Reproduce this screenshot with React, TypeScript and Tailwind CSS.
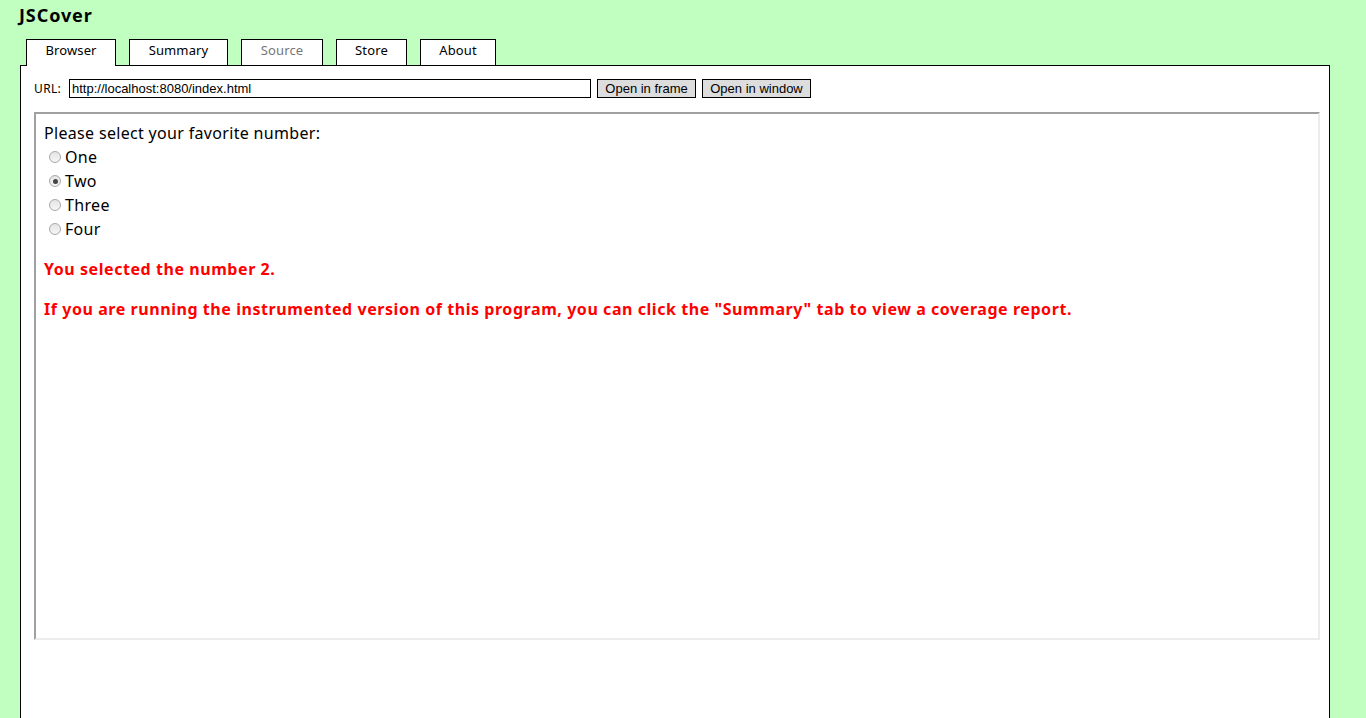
import React from "react";

const tabs = [
  { label: "Browser", w: "w-[90px]", active: true },
  { label: "Summary", w: "w-[99px]" },
  { label: "Source", w: "w-[82px]", disabled: true },
  { label: "Store", w: "w-[71px]" },
  { label: "About", w: "w-[76px]" },
];

const options = ["One", "Two", "Three", "Four"];

function Radio({ checked }: { checked?: boolean }) {
  return (
    <span className="inline-flex items-center justify-center w-[12px] h-[12px] rounded-full border border-[#a8a8a8] bg-gradient-to-b from-[#e4e4e4] to-[#f6f6f6] mr-[4px] ml-[5px]">
      {checked && <span className="w-[5px] h-[5px] rounded-full bg-[#444]" />}
    </span>
  );
}

export default function App() {
  return (
    <div className="h-[718px] overflow-hidden bg-[#c0ffc0] text-black font-['Noto_Sans',sans-serif]">
      <h1 className="pl-[19px] pt-[4px] h-[39px] text-[18px] leading-[22px] font-bold tracking-[0.05em]">JSCover</h1>

      <div className="flex gap-[13px] pl-[26px] relative z-10">
        {tabs.map((t) => (
          <div
            key={t.label}
            className={`${t.w} bg-white border border-black border-b-0 flex justify-center pt-[1px] text-[13px] leading-[18px] tracking-[0.01em] ${
              t.disabled ? "text-[#777]" : "text-black"
            } ${t.active ? "h-[27px] -mb-px" : "h-[26px]"}`}
          >
            {t.label}
          </div>
        ))}
      </div>

      <div className="ml-[20px] w-[1310px] h-[700px] bg-white border border-black">
        <div className="flex items-center pl-[13px] pt-[13px]">
          <span className="w-[35px] text-[12px] tracking-[0.03em]">URL:</span>
          <div className="w-[522px] h-[19px] border border-black flex items-center px-[2px] text-[13px] font-['Liberation_Sans',sans-serif]">
            http://localhost:8080/index.html
          </div>
          <button className="ml-[6px] w-[99px] h-[19px] border border-black bg-[#dddddd] text-[13px] leading-none font-['Liberation_Sans',sans-serif]">
            Open in frame
          </button>
          <button className="ml-[6px] w-[109px] h-[19px] border border-black bg-[#dddddd] text-[13px] leading-none font-['Liberation_Sans',sans-serif]">
            Open in window
          </button>
        </div>

        <div className="ml-[13px] mt-[14px] w-[1286px] h-[528px] border-2 border-t-[#a0a0a0] border-l-[#a0a0a0] border-b-[#ececec] border-r-[#ececec] px-[8px] pt-[7px] text-[16px] leading-[24px] tracking-[0.02em]">
          <div>Please select your favorite number:</div>
          {options.map((o, i) => (
            <div key={o} className="flex items-center">
              <Radio checked={i === 1} />
              <span>{o}</span>
            </div>
          ))}
          <p className="mt-[16px] text-[#ff0000] font-bold tracking-[0.035em]">You selected the number 2.</p>
          <p className="mt-[16px] text-[#ff0000] font-bold tracking-[0.035em]">
            If you are running the instrumented version of this program, you can click the "Summary" tab to view a coverage report.
          </p>
        </div>
      </div>
    </div>
  );
}
